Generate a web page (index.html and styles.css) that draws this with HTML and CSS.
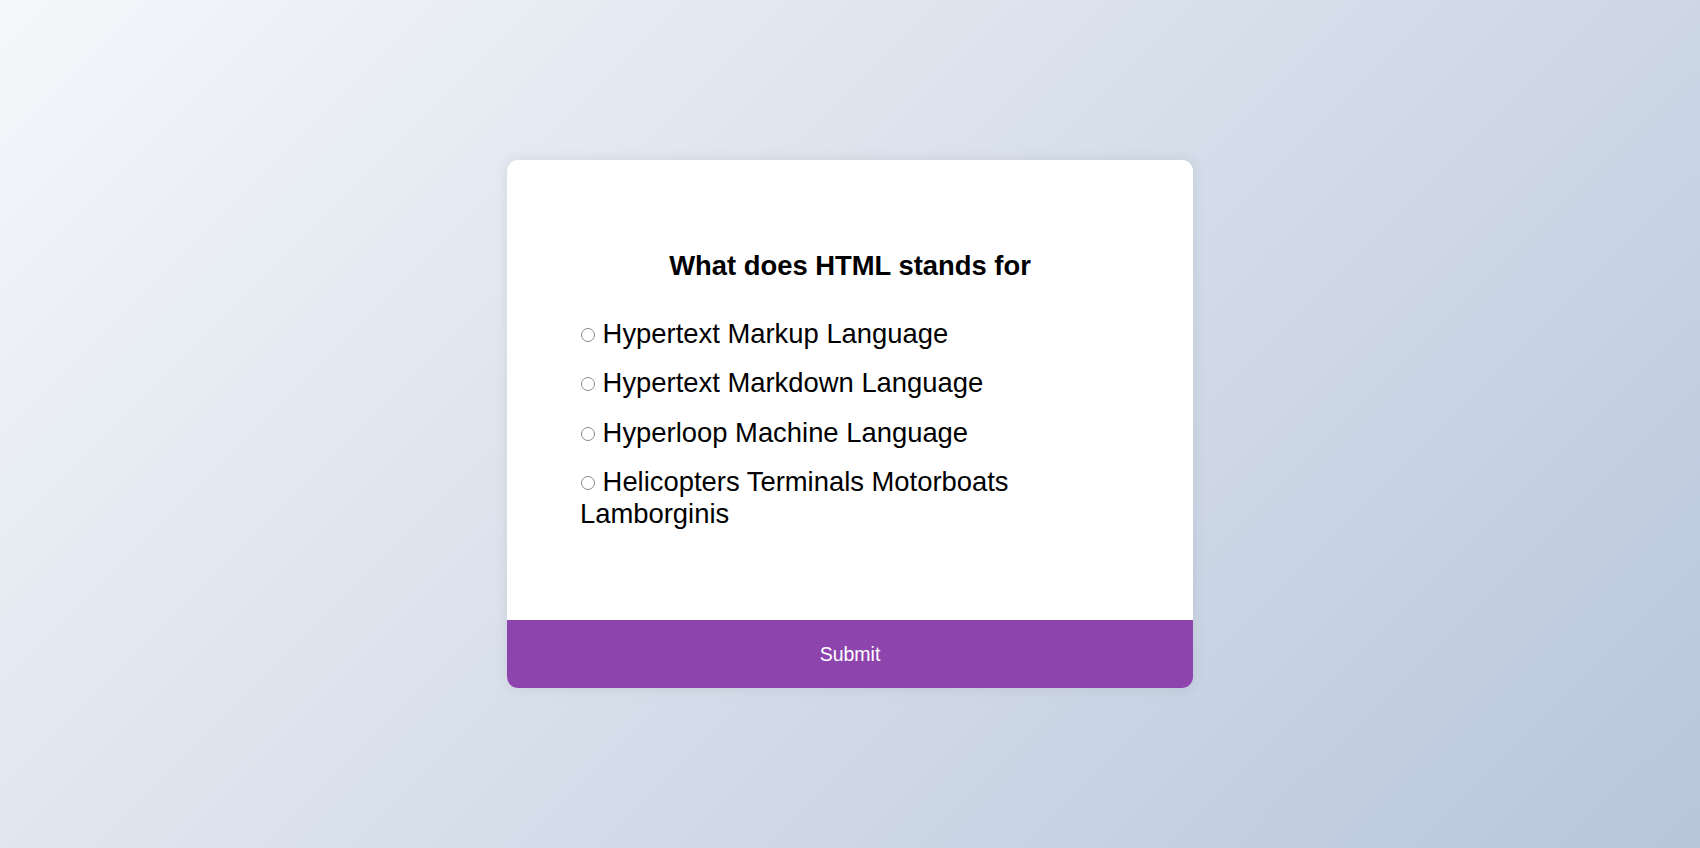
FILE: index.html
```html
<!DOCTYPE html>
<html lang="en">
<head>
<meta charset="UTF-8">
<title>Quiz</title>
<link rel="stylesheet" href="styles.css">
</head>
<body>
  <div class="quiz-container">
    <div class="quiz-header">
      <h2 class="question">What does HTML stands for</h2>
      <ul class="answers">
        <li><label><span class="radio"></span> Hypertext Markup Language</label></li>
        <li><label><span class="radio"></span> Hypertext Markdown Language</label></li>
        <li><label><span class="radio"></span> Hyperloop Machine Language</label></li>
        <li><label><span class="radio"></span> Helicopters Terminals Motorboats Lamborginis</label></li>
      </ul>
    </div>
    <button class="submit">Submit</button>
  </div>
</body>
</html>
```
FILE: styles.css
```css
html, body {
  margin: 0;
  height: 100%;
}
body {
  background-color: #b8c6db;
  background-image: linear-gradient(315deg, #b8c6db 0%, #f5f7fa 100%);
  font-family: "Liberation Sans", Arial, sans-serif;
  display: flex;
  align-items: center;
  justify-content: center;
  overflow: hidden;
}
.quiz-container {
  background: #fff;
  border-radius: 11px;
  box-shadow: 0 0 11px 2px rgba(100, 100, 100, 0.1);
  width: 686px;
  overflow: hidden;
}
.quiz-header {
  padding: 73px;
}
.question {
  margin: 0;
  padding: 17px 0 18px;
  text-align: center;
  font-size: 27.4px;
  font-weight: bold;
  line-height: 31.5px;
  color: #000;
}
.answers {
  list-style: none;
  padding: 0;
  margin: 0;
}
.answers li {
  font-size: 27.4px;
  line-height: 31.5px;
  margin: 18px 0;
  color: #000;
}
.answers label { cursor: pointer; }
.radio {
  display: inline-block;
  width: 12px;
  height: 12px;
  border: 1px solid #8a8a8a;
  border-radius: 50%;
  margin-left: 1px;
  vertical-align: 1px;
  box-sizing: content-box;
}
.submit {
  display: block;
  width: 100%;
  height: 68px;
  border: none;
  background: #8e44ad;
  color: #fff;
  font-family: inherit;
  font-size: 19.5px;
  cursor: pointer;
  padding: 0;
}
```
